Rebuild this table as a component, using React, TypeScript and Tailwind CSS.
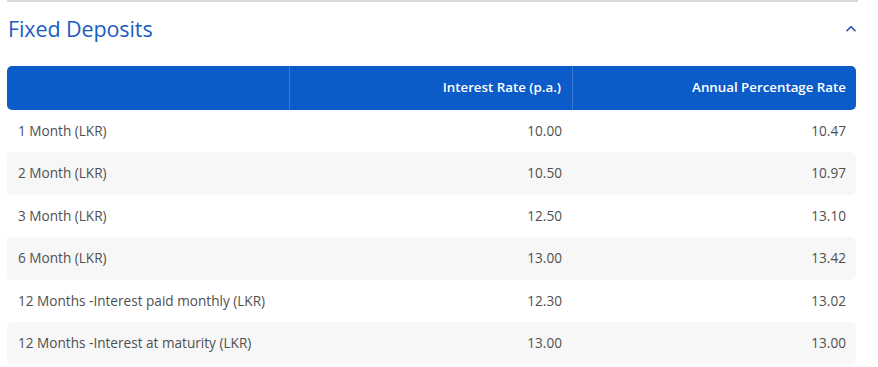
import React from 'react';

const rows = [
  { term: '1 Month (LKR)', rate: '10.00', apr: '10.47' },
  { term: '2 Month (LKR)', rate: '10.50', apr: '10.97' },
  { term: '3 Month (LKR)', rate: '12.50', apr: '13.10' },
  { term: '6 Month (LKR)', rate: '13.00', apr: '13.42' },
  { term: '12 Months -Interest paid monthly (LKR)', rate: '12.30', apr: '13.02' },
  { term: '12 Months -Interest at maturity (LKR)', rate: '13.00', apr: '13.00' },
];

export default function App() {
  return (
    <div className="w-[878px] h-[367px] bg-white overflow-hidden" style={{ fontFamily: '"Open Sans", "Noto Sans", sans-serif' }}>
      <div className="ml-[7px] w-[851px] border-t-2 border-[#d9d9d9]" />
      <div className="flex items-center justify-between pl-[8px] pr-[20px] h-[56px] pb-[2px]">
        <h2 className="text-[21.5px] text-[#1b5cc4] font-medium tracking-[-0.1px]">Fixed Deposits</h2>
        <svg width="14" height="14" viewBox="0 0 24 24" fill="none" stroke="#2448a8" strokeWidth="2.6" strokeLinecap="round" strokeLinejoin="round">
          <path d="M5 15l7-7 7 7" />
        </svg>
      </div>
      <div className="ml-[7px] w-[849px] mt-[8px]">
        <div className="grid grid-cols-3 h-[44px] bg-[#0b5bc9] rounded-[5px] text-white text-[13.3px] font-semibold">
          <div className="border-r border-[#3a7ad6]" />
          <div className="flex items-center justify-end pr-[11px] border-r border-[#3a7ad6]">Interest Rate (p.a.)</div>
          <div className="flex items-center justify-end pr-[10px]">Annual Percentage Rate</div>
        </div>
        {rows.map((r, i) => (
          <div
            key={i}
            className={`grid grid-cols-3 h-[42.4px] items-center text-[13.6px] text-[#505050] rounded-[5px] ${i % 2 === 1 ? 'bg-[#f7f7f7]' : 'bg-white'}`}
          >
            <div className="pl-[11px] whitespace-nowrap">{r.term}</div>
            <div className="text-right pr-[11px]">{r.rate}</div>
            <div className="text-right pr-[10px]">{r.apr}</div>
          </div>
        ))}
      </div>
    </div>
  );
}
